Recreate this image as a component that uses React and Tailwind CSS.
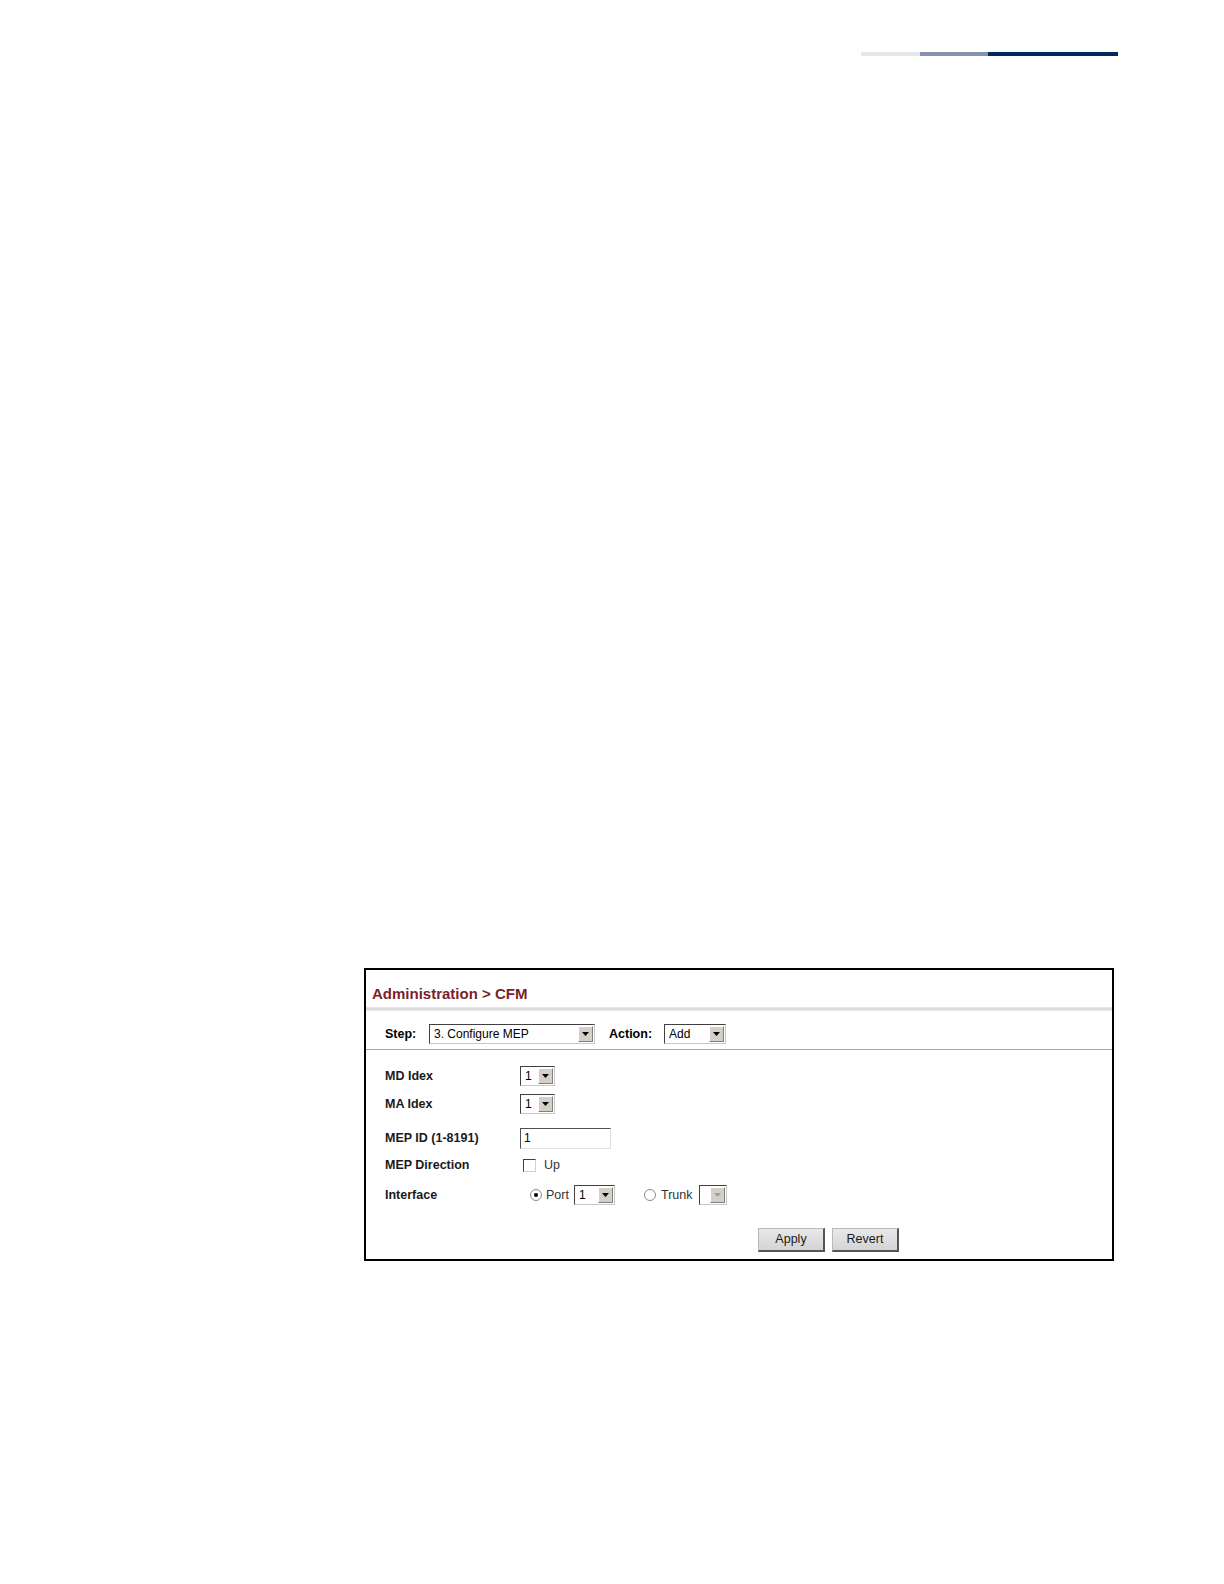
import React from 'react';

const Arrow = ({ disabled }) => (
    <span className="flex items-center justify-center w-[15px] h-[16px] bg-[#d4d0c8] border border-t-white border-l-white border-r-[#808080] border-b-[#808080]">
        <svg width="7" height="4" viewBox="0 0 7 4">
            <path d="M0 0h7L3.5 4z" fill={disabled ? '#a0a0a0' : '#000'} />
        </svg>
    </span>
);

const Select = ({ value, width, disabled }) => (
    <div
        className={`flex items-center justify-between h-[20px] pl-[4px] pr-[1px] bg-white border border-t-[#404040] border-l-[#404040] border-r-[#c8c8c8] border-b-[#c8c8c8] text-[12px] text-black ${width}`}
    >
        <span>{value}</span>
        <Arrow disabled={disabled} />
    </div>
);

const Label = ({ children }) => (
    <div className="w-[135px] text-[12.5px] font-bold text-[#1a1a1a]">{children}</div>
);

const Radio = ({ checked }) => (
    <span className="flex items-center justify-center w-[12px] h-[12px] rounded-full border border-[#8a8a8a] bg-white">
        {checked && <span className="w-[4px] h-[4px] rounded-full bg-black" />}
    </span>
);

const Button = ({ children }) => (
    <button className="w-[67px] h-[24px] text-[12.5px] text-[#1a1a1a] bg-gradient-to-b from-[#e8e8e8] to-[#d4d4d4] border border-[#b8b8b8] border-r-2 border-b-2 border-r-[#555] border-b-[#555]">
        {children}
    </button>
);

export default function App() {
    return (
        <div className="w-[1224px] h-[1584px] bg-white font-['Liberation_Sans',Arial,sans-serif]">
            <div className="flex pt-[52px] pl-[861px]">
                <div className="w-[59px] h-[4px] bg-[#e6e7ec]" />
                <div className="w-[68px] h-[4px] bg-[#8791b0]" />
                <div className="w-[130px] h-[4px] bg-[#002a5e]" />
            </div>

            <div className="mt-[912px] ml-[364px] w-[750px] h-[293px] border-2 border-black flex flex-col">
                <div className="pt-[15px] pl-[6px] text-[15px] leading-[18px] font-bold text-[#7a1f2c]">
                    Administration &gt; CFM
                </div>
                <div className="mt-[4px] h-[4px] bg-gradient-to-b from-[#ececec] via-[#d6d6d6] to-[#f0f0f0]" />

                <div className="flex items-center h-[20px] mt-[13px] pl-[19px] text-[12.5px]">
                    <span className="font-bold w-[44px]">Step:</span>
                    <Select value="3. Configure MEP" width="w-[166px]" />
                    <span className="font-bold ml-[14px] w-[55px]">Action:</span>
                    <Select value="Add" width="w-[62px]" />
                </div>
                <div className="mt-[5px] h-px bg-[#a8a8a8]" />

                <div className="flex flex-col pl-[19px] pt-[16px]">
                    <div className="flex items-center h-[20px]">
                        <Label>MD Idex</Label>
                        <Select value="1" width="w-[35px]" />
                    </div>
                    <div className="flex items-center h-[20px] mt-[8px]">
                        <Label>MA Idex</Label>
                        <Select value="1" width="w-[35px]" />
                    </div>
                    <div className="flex items-center h-[21px] mt-[14px]">
                        <Label>MEP ID (1-8191)</Label>
                        <div className="w-[91px] h-[21px] pl-[3px] text-[12px] leading-[19px] bg-white border border-t-[#505050] border-l-[#505050] border-r-[#e0e0e0] border-b-[#e0e0e0]">
                            1
                        </div>
                    </div>
                    <div className="flex items-center h-[20px] mt-[6px]">
                        <Label>MEP Direction</Label>
                        <span className="ml-[3px] w-[13px] h-[13px] border border-t-[#404040] border-l-[#404040] border-r-[#d0d0d0] border-b-[#d0d0d0] bg-white" />
                        <span className="ml-[8px] text-[12.5px] text-[#333]">Up</span>
                    </div>
                    <div className="flex items-center h-[22px] mt-[9px] text-[12.5px] text-[#333]">
                        <Label>Interface</Label>
                        <span className="ml-[10px]"><Radio checked /></span>
                        <span className="ml-[4px] w-[28px]">Port</span>
                        <Select value="1" width="w-[41px]" />
                        <span className="ml-[29px]"><Radio /></span>
                        <span className="ml-[5px] w-[38px]">Trunk</span>
                        <Select value="" width="w-[28px]" disabled />
                    </div>
                </div>

                <div className="flex gap-[7px] pl-[392px] mt-[22px]">
                    <Button>Apply</Button>
                    <Button>Revert</Button>
                </div>
            </div>
        </div>
    );
}
